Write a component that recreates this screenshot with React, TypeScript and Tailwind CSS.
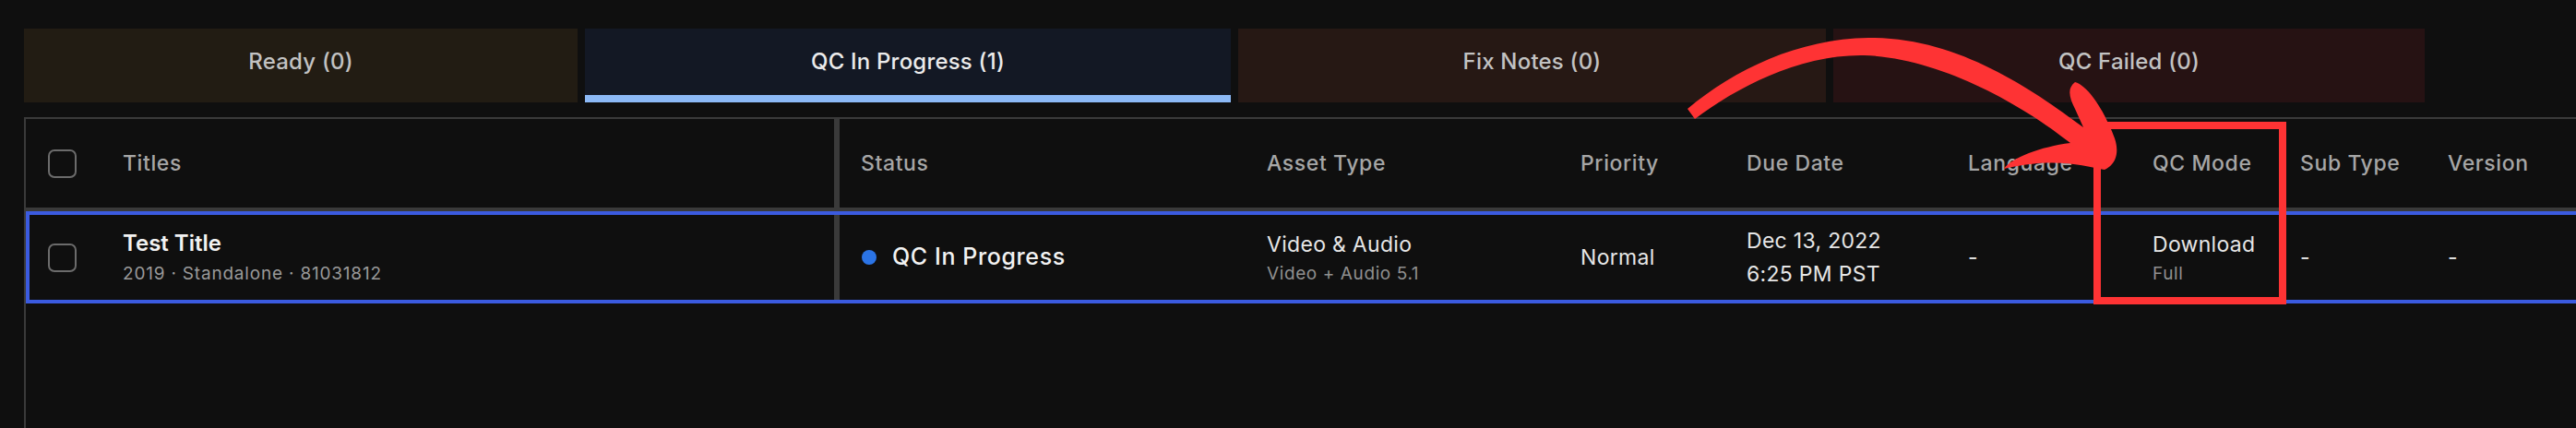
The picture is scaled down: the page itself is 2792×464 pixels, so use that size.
import React from "react";

type Tab = { label: string; count: number; width: string; bg: string; active?: boolean };

const tabs: Tab[] = [
  { label: "Ready", count: 0, width: "w-[600px]", bg: "bg-[#221c13]" },
  { label: "QC In Progress", count: 1, width: "w-[700px]", bg: "bg-[#131824]", active: true },
  { label: "Fix Notes", count: 0, width: "w-[637px]", bg: "bg-[#261814]" },
  { label: "QC Failed", count: 0, width: "w-[641px]", bg: "bg-[#261213]" },
];

// widths of the columns after the Titles/Status divider
const cols = [
  { key: "status", label: "Status", width: "w-[463px] pl-[23px]" },
  { key: "asset", label: "Asset Type", width: "w-[340px]" },
  { key: "priority", label: "Priority", width: "w-[180px]" },
  { key: "due", label: "Due Date", width: "w-[240px]" },
  { key: "lang", label: "Language", width: "w-[200px]" },
  { key: "mode", label: "QC Mode", width: "w-[160px]" },
  { key: "sub", label: "Sub Type", width: "w-[160px]" },
  { key: "version", label: "Version", width: "w-[160px]" },
];

function Checkbox() {
  return <div className="h-[31px] w-[31px] shrink-0 rounded-[7px] border-2 border-[#6b6b6b]" />;
}

function Stacked({ top, bottom }: { top: string; bottom: string }) {
  return (
    <div className="flex flex-col">
      <span className="text-[23px] leading-[30px] tracking-[0.3px] text-[#e6e6e6]">{top}</span>
      <span className="mt-[5px] text-[19px] leading-[24px] tracking-[0.6px] text-[#8f8f8f]">{bottom}</span>
    </div>
  );
}

function Annotation() {
  return (
    <svg
      className="pointer-events-none absolute inset-0"
      width={2792}
      height={464}
      viewBox="0 0 2792 464"
    >
      <path
        fill="#fe3334"
        d="M 1829 118
           C 1880 75, 1950 42, 2025 41
           C 2120 40, 2200 95, 2258 138
           L 2249 118
           C 2243 106, 2240 96, 2249 89
           C 2263 93, 2280 118, 2292 150
           C 2297 165, 2294 178, 2281 184
           C 2258 180, 2228 170, 2172 183
           C 2180 171, 2212 159, 2244 155
           C 2190 112, 2100 62, 2020 60
           C 1950 59, 1882 95, 1837 129 Z"
      />
      <rect x={2273} y={136} width={201} height={190} fill="none" stroke="#fe3334" strokeWidth={8} />
    </svg>
  );
}

export default function App() {
  return (
    <div className="relative h-[464px] w-[2792px] overflow-hidden bg-[#0f0f0f] font-[family-name:Inter,sans-serif]">
      <div className="flex gap-2 pl-[26px] pt-[31px]">
        {tabs.map((t) => (
          <div
            key={t.label}
            className={`flex h-[80px] items-center justify-center border-b-8 ${t.width} ${t.bg} ${
              t.active ? "border-[#8cb9f6] text-[#ebebeb]" : "border-transparent text-[#c2c2c2]"
            }`}
          >
            <span className="text-[24px] font-medium tracking-[0.2px]">
              {t.label} ({t.count})
            </span>
          </div>
        ))}
      </div>

      <div className="ml-[26px] mt-4 h-[400px] w-[2800px] border-l-2 border-t-2 border-[#3a3a3a]">
        {/* header */}
        <div className="flex h-[100px] items-stretch border-b-4 border-[#3a3a3a] text-[23px] font-medium tracking-[0.6px] text-[#a6a6a6]">
          <div className="flex w-[876px] items-center pl-6">
            <Checkbox />
            <span className="ml-[50px]">Titles</span>
          </div>
          <div className="w-[6px] bg-[#3a3a3a]" />
          {cols.map((c) => (
            <div key={c.key} className={`flex items-center ${c.width}`}>
              {c.label}
            </div>
          ))}
        </div>

        {/* selected row */}
        <div className="flex h-[100px] items-stretch border-4 border-[#3b5be0] text-[23px] tracking-[0.3px] text-[#e6e6e6]">
          <div className="flex w-[872px] items-center pl-5">
            <Checkbox />
            <div className="ml-[50px] flex flex-col">
              <span className="text-[24px] font-semibold leading-[30px] tracking-normal text-[#f2f2f2]">
                Test Title
              </span>
              <span className="mt-[6px] text-[19px] leading-[24px] tracking-[0.8px] text-[#9a9a9a]">
                2019 · Standalone · 81031812
              </span>
            </div>
          </div>
          <div className="w-[6px] bg-[#3a3a3a]" />
          <div className="flex w-[463px] items-center gap-[17px] pl-[24px]">
            <span className="h-4 w-4 rounded-full bg-[#2b74e6]" />
            <span className="text-[25px] font-medium tracking-[0.6px] text-[#f2f2f2]">QC In Progress</span>
          </div>
          <div className="flex w-[340px] items-center">
            <Stacked top="Video & Audio" bottom="Video + Audio 5.1" />
          </div>
          <div className="flex w-[180px] items-center">Normal</div>
          <div className="flex w-[240px] items-center">
            <div className="flex flex-col leading-[36px]">
              <span>Dec 13, 2022</span>
              <span>6:25 PM PST</span>
            </div>
          </div>
          <div className="flex w-[200px] items-center">-</div>
          <div className="flex w-[160px] items-center">
            <Stacked top="Download" bottom="Full" />
          </div>
          <div className="flex w-[160px] items-center">-</div>
          <div className="flex w-[160px] items-center">-</div>
        </div>
      </div>

      <Annotation />
    </div>
  );
}
